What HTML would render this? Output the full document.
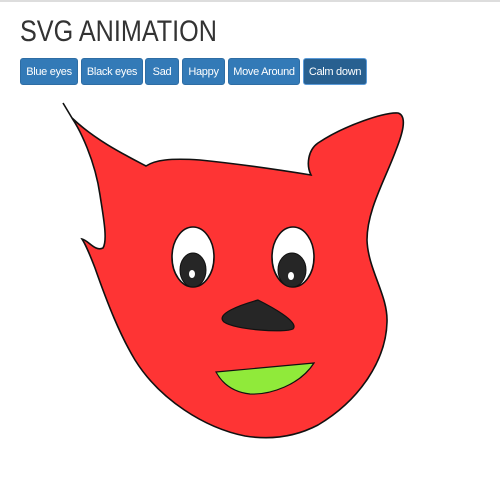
<!DOCTYPE html>
<html><head><style>
body{margin:0;width:500px;height:500px;overflow:hidden;background:#fff;font-family:"Liberation Sans",sans-serif;}
.top{height:2px;background:#ddd;}
h1{position:absolute;left:20px;top:15px;margin:0;font-size:30px;font-weight:normal;color:#333;transform:scaleX(0.84);transform-origin:0 0;white-space:nowrap;}
.btn{position:absolute;top:58px;height:27px;background:#337ab7;border:1px solid #2e6da4;border-radius:3px;color:#fff;font-size:11px;letter-spacing:-0.3px;line-height:27px;text-align:center;box-sizing:border-box;white-space:nowrap;}
svg{position:absolute;left:0;top:0;}
</style></head><body>
<div class="top"></div>
<h1>SVG ANIMATION</h1>
<div class="btn" style="left:20px;width:58px">Blue eyes</div>
<div class="btn" style="left:81px;width:62px">Black eyes</div>
<div class="btn" style="left:145px;width:34px">Sad</div>
<div class="btn" style="left:182px;width:43px">Happy</div>
<div class="btn" style="left:228px;width:72px">Move Around</div>
<div class="btn" style="left:303px;width:64px;background:#286090;border-color:#5a9ad8">Calm down</div>
<svg width="500" height="500">
<path d="M63,103 L72,118 C95,140 125,155 146,166 C155,160 170,158 200,160 C240,164 280,170 311,175 C306,165 308,150 318,143 C345,125 385,112 398,113 C408,116 402,135 396,150 C385,180 367,210 367,240 C368,270 388,295 387,322 C386,360 360,400 318,425 C295,437 270,440 245,436 C205,428 160,400 135,360 C120,335 108,305 95,268 C90,255 86,245 82,239 C88,240 95,252 103,248 C108,240 103,215 100,195 C95,160 80,130 72,118" fill="#fe3434" stroke="#111" stroke-width="1.6"/>
<ellipse cx="193" cy="257" rx="21" ry="30" fill="#fff" stroke="#111" stroke-width="1.6"/>
<ellipse cx="193" cy="270" rx="13" ry="17" fill="#262626" stroke="#111"/>
<ellipse cx="192" cy="274" rx="3" ry="4" fill="#fff"/>
<ellipse cx="293" cy="257" rx="21" ry="30" fill="#fff" stroke="#111" stroke-width="1.6"/>
<ellipse cx="292" cy="270" rx="14" ry="17" fill="#262626" stroke="#111"/>
<ellipse cx="291" cy="276" rx="3" ry="4" fill="#fff"/>
<path d="M258,300 C240,305 215,314 224,322 C235,330 285,333 293,329 C300,322 270,306 258,300 Z" fill="#262626" stroke="#111" stroke-width="1.2"/>
<path d="M216,372 L314,363 C300,385 270,395 250,394 C232,392 222,383 216,372 Z" fill="#90ea3a" stroke="#111" stroke-width="1.2"/>
</svg>
</body></html>
